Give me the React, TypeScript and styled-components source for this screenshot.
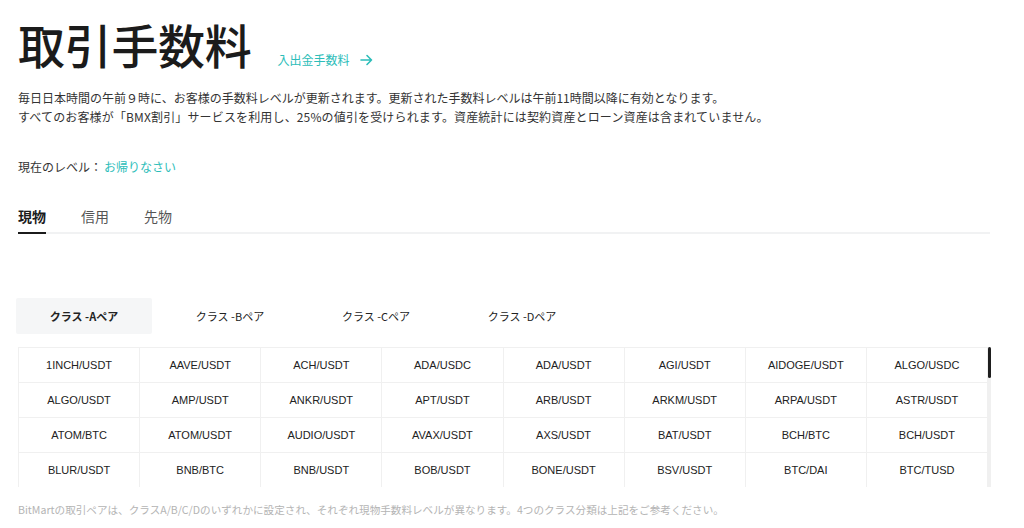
import React, { useState } from "react";
import styled, { createGlobalStyle } from "styled-components";

const GlobalStyle = createGlobalStyle`
  html, body {
    margin: 0;
    padding: 0;
    background: #fff;
  }
  body {
    font-family: "Liberation Sans", "Noto Sans CJK JP", sans-serif;
    color: #222;
  }
`;

// only the rows that are in view of the scroll box
const PAIRS = [
  "1INCH/USDT", "AAVE/USDT", "ACH/USDT", "ADA/USDC", "ADA/USDT", "AGI/USDT", "AIDOGE/USDT", "ALGO/USDC",
  "ALGO/USDT", "AMP/USDT", "ANKR/USDT", "APT/USDT", "ARB/USDT", "ARKM/USDT", "ARPA/USDT", "ASTR/USDT",
  "ATOM/BTC", "ATOM/USDT", "AUDIO/USDT", "AVAX/USDT", "AXS/USDT", "BAT/USDT", "BCH/BTC", "BCH/USDT",
  "BLUR/USDT", "BNB/BTC", "BNB/USDT", "BOB/USDT", "BONE/USDT", "BSV/USDT", "BTC/DAI", "BTC/TUSD",
];

const Page = styled.div`
  padding: 14px 34px 0 18px;
  width: 972px;
`;

const TitleRow = styled.div`
  display: flex;
  align-items: flex-end;
  gap: 26px;
`;

const Title = styled.h1`
  margin: 0;
  font-family: "Noto Sans CJK JP", sans-serif;
  font-size: 47px;
  font-weight: 500;
  line-height: 60px;
  color: #1b1b1b;
  letter-spacing: -0.3px;
`;

const TealLink = styled.a`
  display: flex;
  align-items: center;
  gap: 10px;
  margin-bottom: 6px;
  font-family: "Noto Sans CJK JP", sans-serif;
  font-size: 12px;
  color: #2cbdb9;
  text-decoration: none;
  cursor: pointer;
`;

const Description = styled.div`
  margin-top: 14px;
  font-family: "Noto Sans CJK JP", sans-serif;
  font-size: 12px;
  line-height: 19px;
  color: #333;
`;

const DescLine = styled.div<{ $spacing?: number }>`
  letter-spacing: ${(p) => p.$spacing ?? 0}px;
`;

const Level = styled.div`
  margin-top: 32px;
  font-family: "Noto Sans CJK JP", sans-serif;
  font-size: 12px;
  line-height: 18px;
  color: #333;
`;

const LevelValue = styled.span`
  color: #2cbdb9;
  margin-left: 2px;
`;

const Tabs = styled.div`
  margin-top: 30px;
  display: flex;
  gap: 35px;
  border-bottom: 2px solid #f1f2f3;
`;

const Tab = styled.div<{ $active: boolean }>`
  position: relative;
  padding-bottom: 6px;
  font-family: "Noto Sans CJK JP", sans-serif;
  font-size: 14px;
  line-height: 20px;
  font-weight: ${(p) => (p.$active ? 700 : 400)};
  color: ${(p) => (p.$active ? "#1b1b1b" : "#555")};
  cursor: pointer;

  &::after {
    content: "";
    display: ${(p) => (p.$active ? "block" : "none")};
    position: absolute;
    left: 0;
    right: 0;
    bottom: -2px;
    height: 2px;
    background: #1b1b1b;
  }
`;

const ClassTabs = styled.div`
  margin-top: 64px;
  margin-left: -2px;
  display: flex;
  gap: 10px;
`;

const ClassTab = styled.div<{ $active: boolean }>`
  width: 136px;
  height: 36px;
  display: flex;
  align-items: center;
  justify-content: center;
  border-radius: 2px;
  font-family: "Noto Sans CJK JP", sans-serif;
  font-size: 11px;
  font-weight: ${(p) => (p.$active ? 700 : 400)};
  color: #222;
  background: ${(p) => (p.$active ? "#f5f6f7" : "transparent")};
  cursor: pointer;
`;

const TableBox = styled.div`
  margin-top: 13px;
  width: 973px;
  height: 140px;
  display: flex;
  overflow: hidden;
`;

const PairGrid = styled.div`
  flex: 1;
  align-self: flex-start;
  display: grid;
  grid-template-columns: repeat(8, 1fr);
  border-top: 1px solid #f0f0f0;
  border-left: 1px solid #f0f0f0;
`;

const PairCell = styled.div`
  height: 34px;
  display: flex;
  align-items: center;
  justify-content: center;
  border-right: 1px solid #f0f0f0;
  border-bottom: 1px solid #f0f0f0;
  font-size: 11px;
  color: #222;
`;

const ScrollTrack = styled.div`
  width: 3px;
  background: #f0f0f0;
  display: flex;
  flex-direction: column;
`;

const ScrollThumb = styled.div`
  height: 31px;
  background: #1e1e1e;
  border-radius: 2px;
`;

const Note = styled.div`
  margin-top: 15px;
  font-family: "Noto Sans CJK JP", sans-serif;
  font-size: 10.6px;
  color: #b4b4b4;
`;

const Arrow = () => (
  <svg width="13" height="12" viewBox="0 0 13 12" fill="none">
    <path d="M1 6h10.5M7 1.5L11.5 6 7 10.5" stroke="#2cbdb9" strokeWidth="1.6" strokeLinecap="round" strokeLinejoin="round" />
  </svg>
);

const App: React.FC = () => {
  const [tab, setTab] = useState(0);
  const [cls, setCls] = useState(0);

  return (
    <Page>
      <GlobalStyle />
      <TitleRow>
        <Title>取引手数料</Title>
        <TealLink>
          入出金手数料
          <Arrow />
        </TealLink>
      </TitleRow>
      <Description>
        <DescLine>
          毎日日本時間の午前９時に、お客様の手数料レベルが更新されます。更新された手数料レベルは午前11時間以降に有効となります。
        </DescLine>
        <DescLine $spacing={0.15}>
          すべてのお客様が「BMX割引」サービスを利用し、25%の値引を受けられます。資産統計には契約資産とローン資産は含まれていません。
        </DescLine>
      </Description>
      <Level>
        現在のレベル：<LevelValue>お帰りなさい</LevelValue>
      </Level>
      <Tabs>
        {["現物", "信用", "先物"].map((t, i) => (
          <Tab key={t} $active={tab === i} onClick={() => setTab(i)}>
            {t}
          </Tab>
        ))}
      </Tabs>
      <ClassTabs>
        {["A", "B", "C", "D"].map((c, i) => (
          <ClassTab key={c} $active={cls === i} onClick={() => setCls(i)}>
            クラス -{c}ペア
          </ClassTab>
        ))}
      </ClassTabs>
      <TableBox>
        <PairGrid>
          {PAIRS.map((p) => (
            <PairCell key={p}>{p}</PairCell>
          ))}
        </PairGrid>
        <ScrollTrack>
          <ScrollThumb />
        </ScrollTrack>
      </TableBox>
      <Note>
        BitMartの取引ペアは、クラスA/B/C/Dのいずれかに設定され、それぞれ現物手数料レベルが異なります。4つのクラス分類は上記をご参考ください。
      </Note>
    </Page>
  );
};

export default App;
